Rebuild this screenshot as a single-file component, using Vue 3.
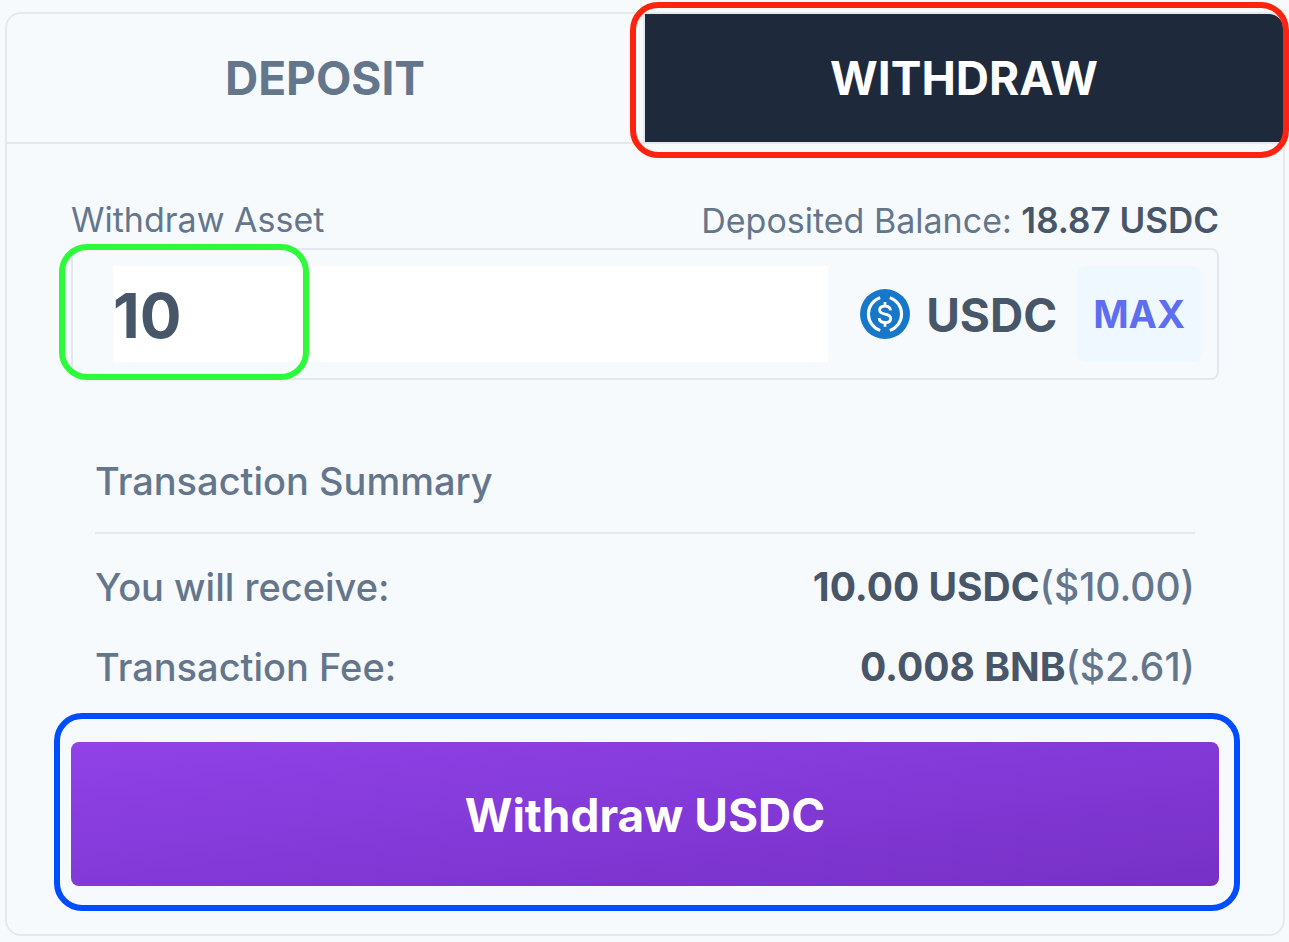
<script setup>
import { ref } from 'vue'

const tabs = ['Deposit', 'Withdraw']
const active = ref('Withdraw')
const amount = ref('10')
const summary = [
  { label: 'You will receive:', value: '10.00 USDC', fiat: '($10.00)' },
  { label: 'Transaction Fee:', value: '0.008 BNB', fiat: '($2.61)' },
]
</script>

<template>
  <main class="card">
    <nav class="tabs">
      <div v-for="tab in tabs" :key="tab" class="tab-cell">
        <button type="button" class="tab" :class="{ active: tab === active }" @click="active = tab">{{ tab }}</button>
        <span v-if="tab === active" class="mark mark-red"></span>
      </div>
    </nav>

    <form class="body" @submit.prevent>
      <div class="labels">
        <label for="amount">Withdraw Asset</label>
        <span>Deposited Balance: <strong>18.87 USDC</strong></span>
      </div>

      <div class="field">
        <input id="amount" v-model="amount" type="text" inputmode="decimal" />
        <div class="asset">
          <svg class="coin" viewBox="0 0 50 50" aria-hidden="true">
            <circle cx="25" cy="25" r="25" fill="#1778c9" />
            <g fill="none" stroke="#fff" stroke-width="3.1">
              <path d="M20.2 8.6A17.3 17.3 0 0 0 20.2 41.4" />
              <path d="M29.8 8.6A17.3 17.3 0 0 1 29.8 41.4" />
              <path d="M30.5 21.4C30.2 18.4 28.2 17.2 25 17.2C21.7 17.2 19.6 18.7 19.6 21.1C19.6 23.8 21.9 24.5 25 25.1C28.4 25.7 30.7 26.6 30.7 29.4C30.7 32 28.4 33.5 25 33.5C21.5 33.5 19.4 32 19.1 29" stroke-width="2.8" />
              <path d="M25 13V17.5M25 33.3V37.8" stroke-width="2.8" />
            </g>
          </svg>
          <span>USDC</span>
        </div>
        <button type="button" class="max">MAX</button>
        <span class="mark mark-green"></span>
      </div>

      <section class="summary">
        <h2>Transaction Summary</h2>
        <dl>
          <div v-for="row in summary" :key="row.label" class="row">
            <dt>{{ row.label }}</dt>
            <dd><strong>{{ row.value }}</strong>{{ row.fiat }}</dd>
          </div>
        </dl>
      </section>

      <div class="action">
        <button type="submit" class="submit">Withdraw USDC</button>
        <span class="mark mark-blue"></span>
      </div>
    </form>
  </main>
</template>

<style>
body {
  background: #f7fafd;
}
</style>

<style scoped>
.card {
  box-sizing: border-box;
  margin: 12px 4px 6px 5px;
  border: 2px solid #e5e9ec;
  border-radius: 16px;
  font-family: Inter, "Liberation Sans", sans-serif;
  color: #64768c;
}

button,
input {
  margin: 0;
  padding: 0;
  border: 0;
  font-family: inherit;
  background: none;
}

button {
  cursor: pointer;
}

strong {
  font-weight: 700;
  color: #475669;
}

.tabs {
  display: grid;
  grid-template-columns: 1fr 1fr;
  border-bottom: 2px solid #e5e9ec;
}

.tab-cell {
  position: relative;
  display: flex;
}

.tab-cell:first-child {
  border-right: 2px solid #e5e9ec;
}

.tab {
  flex: 1;
  height: 128px;
  font-size: 46px;
  line-height: 64px;
  font-weight: 700;
  text-transform: uppercase;
  color: #64768c;
}

.tab.active {
  color: #fff;
  background: #1e2a3b;
}

.tab-cell:last-child .tab {
  border-top-right-radius: 14px;
}

.body {
  padding: 48px 64px;
}

.labels {
  display: flex;
  justify-content: space-between;
  height: 56px;
  font-size: 34px;
  line-height: 56px;
}

.labels strong {
  font-size: 35px;
  font-weight: 600;
}

.field {
  position: relative;
  display: flex;
  align-items: center;
  padding: 16px 16px 16px 40px;
  border: 2px solid #e2e8f0;
  border-radius: 8px;
}

.field input {
  flex: 1;
  min-width: 0;
  height: 96px;
  padding-top: 2px;
  box-sizing: border-box;
  background: #fff;
  font-size: 62px;
  font-weight: 700;
  color: #475669;
  outline: none;
}

.asset {
  display: flex;
  align-items: center;
  gap: 16px;
  margin: 0 20px 0 32px;
  font-size: 46px;
  line-height: 64px;
  font-weight: 700;
  color: #475669;
}

.asset span {
  padding-top: 2px;
}

.coin {
  width: 50px;
  height: 50px;
}

.max {
  height: 96px;
  padding: 0 16px;
  border-radius: 8px;
  background: #f0f8ff;
  font-size: 38px;
  font-weight: 700;
  color: #5d6ff0;
}

.summary {
  margin: 73px 24px 0;
  font-size: 38px;
  line-height: 56px;
  font-weight: 500;
}

h2 {
  margin: 0;
  padding-bottom: 23px;
  border-bottom: 2px solid #e5e9ec;
  font: inherit;
}

dl {
  display: grid;
  gap: 24px;
  margin: 25px 0 0;
}

.row {
  display: flex;
  justify-content: space-between;
  height: 56px;
}

dd {
  margin: 0;
  font-size: 39px;
}

.action {
  position: relative;
  margin-top: 47px;
}

.submit {
  display: block;
  width: 100%;
  height: 144px;
  padding-top: 2px;
  border-radius: 8px;
  background: linear-gradient(to bottom right, #9042e8, #7630c6);
  font-size: 46px;
  font-weight: 700;
  color: #fff;
}

.mark {
  position: absolute;
  box-sizing: border-box;
  border: 6px solid;
  border-radius: 28px;
  pointer-events: none;
}

.mark-red {
  inset: -12px -6px -16px -15px;
  border-color: #ff220c;
}

.mark-green {
  top: -6px;
  left: -14px;
  width: 250px;
  height: 136px;
  border-color: #2cfa3a;
}

.mark-blue {
  inset: -29px -21px -25px -17px;
  border-color: #004cff;
}
</style>
